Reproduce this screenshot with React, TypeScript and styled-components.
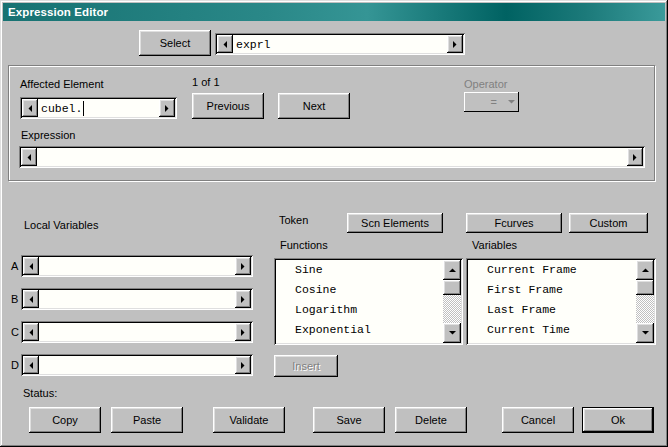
import React from 'react';
import styled, { createGlobalStyle } from 'styled-components';

const GlobalStyle = createGlobalStyle`
  html, body {
    margin: 0;
    padding: 0;
    background: #c0c0c0;
  }
  body {
    font-family: "Liberation Sans", Arial, sans-serif;
    font-size: 11px;
    color: #000;
  }
`;

const raised = `
  box-shadow: inset -1px -1px #000, inset 1px 1px #fff, inset -2px -2px #808080, inset 2px 2px #dfdfdf;
`;

const sunken = `
  box-shadow: inset 1px 1px #808080, inset -1px -1px #fff, inset 2px 2px #000, inset -2px -2px #dfdfdf;
`;

const Window = styled.div`
  width: 668px;
  height: 447px;
  box-sizing: border-box;
  background: #c0c0c0;
  box-shadow: inset -1px -1px #000, inset 1px 1px #dfdfdf, inset -2px -2px #808080, inset 2px 2px #fff;
  display: flex;
  flex-direction: column;
  overflow: hidden;
`;

const TitleBar = styled.div`
  margin: 3px 3px 0;
  height: 18px;
  flex: none;
  display: flex;
  align-items: center;
  padding-left: 5px;
  background: linear-gradient(
    to right,
    #177272 0%,
    #2a8888 40%,
    #359595 55%,
    #006262 76%,
    #1c7a7a 88%,
    #3a9a9a 100%
  );
  color: #fff;
  font-weight: bold;
  font-size: 11.5px;
  letter-spacing: 0.1px;
`;

const Row = styled.div<{ $mt?: number; $ml?: number }>`
  display: flex;
  align-items: flex-start;
  margin-top: ${p => p.$mt ?? 0}px;
  margin-left: ${p => p.$ml ?? 0}px;
`;

const Col = styled.div<{ $w?: number; $mt?: number; $ml?: number }>`
  display: flex;
  flex-direction: column;
  flex: none;
  ${p => (p.$w ? `width: ${p.$w}px;` : '')}
  margin-top: ${p => p.$mt ?? 0}px;
  margin-left: ${p => p.$ml ?? 0}px;
`;

const Label = styled.div<{ $mt?: number; $ml?: number; $w?: number; $disabled?: boolean }>`
  height: 14px;
  line-height: 14px;
  white-space: nowrap;
  margin-top: ${p => p.$mt ?? 0}px;
  margin-left: ${p => p.$ml ?? 0}px;
  ${p => (p.$w ? `width: ${p.$w}px; flex: none;` : '')}
  color: ${p => (p.$disabled ? '#808080' : '#000')};
`;

const Button = styled.button<{ $w: number; $h?: number; $ml?: number; $mt?: number; $default?: boolean; $disabled?: boolean }>`
  width: ${p => p.$w}px;
  height: ${p => p.$h ?? 26}px;
  flex: none;
  box-sizing: border-box;
  margin: ${p => p.$mt ?? 0}px 0 0 ${p => p.$ml ?? 0}px;
  padding: 0;
  background: #c0c0c0;
  font-family: "Liberation Sans", Arial, sans-serif;
  font-size: 11px;
  color: ${p => (p.$disabled ? '#808080' : '#000')};
  ${p => (p.$disabled ? 'text-shadow: 1px 1px #fff;' : '')}
  border: ${p => (p.$default ? '1px solid #000' : 'none')};
  ${raised}
`;

const GroupBox = styled.div`
  margin: 9px 0 0 8px;
  width: 647px;
  height: 116px;
  box-sizing: border-box;
  border: 1px solid #808080;
  box-shadow: inset 1px 1px #fff, 1px 1px #fff;
  padding: 10px 0 0 11px;
  display: flex;
  flex-direction: column;
`;

const ScrollField = styled.div<{ $w: number; $mt?: number; $ml?: number }>`
  width: ${p => p.$w}px;
  height: 22px;
  flex: none;
  box-sizing: border-box;
  padding: 2px;
  margin-top: ${p => p.$mt ?? 0}px;
  margin-left: ${p => p.$ml ?? 0}px;
  display: flex;
  background: #fffffa;
  ${sunken}
`;

const ArrowBtn = styled.div<{ $h?: number }>`
  width: 16px;
  flex: none;
  ${p => (p.$h ? `height: ${p.$h}px;` : '')}
  background: #c0c0c0;
  display: flex;
  align-items: center;
  justify-content: center;
  ${raised}
`;

const FieldText = styled.div`
  flex: 1;
  display: flex;
  align-items: center;
  padding-left: 3px;
  font-family: "Liberation Mono", "Courier New", monospace;
  font-size: 11.5px;
  white-space: pre;
`;

const Caret = styled.span`
  display: inline-block;
  width: 1px;
  height: 15px;
  background: #000;
  margin-left: 1px;
`;

const Combo = styled.div`
  width: 55px;
  height: 20px;
  margin-top: 1px;
  box-sizing: border-box;
  background: #c0c0c0;
  display: flex;
  align-items: center;
  justify-content: flex-end;
  padding-right: 4px;
  gap: 11px;
  color: #808080;
  font-size: 11px;
  box-shadow: inset -1px -1px #000, inset 1px 1px #fff;
`;

const Lower = styled.div`
  display: flex;
  align-items: flex-start;
`;

const VarRow = styled.div<{ $mt: number }>`
  display: flex;
  align-items: center;
  margin-top: ${p => p.$mt}px;
`;

const Letter = styled.div`
  width: 10px;
  flex: none;
  line-height: 14px;
`;

const TwoCols = styled.div<{ $mt: number }>`
  display: grid;
  grid-template-columns: 189px 190px;
  column-gap: 3px;
  margin-top: ${p => p.$mt}px;
`;

const ListBox = styled.div`
  height: 87px;
  box-sizing: border-box;
  padding: 2px;
  display: flex;
  background: #fffffa;
  ${sunken}
`;

const ListItems = styled.div`
  flex: 1;
  padding-left: 19px;
  font-family: "Liberation Mono", "Courier New", monospace;
  font-size: 11.5px;
  line-height: 20px;
  white-space: pre;
  overflow: hidden;
`;

const VScroll = styled.div`
  width: 18px;
  flex: none;
  display: flex;
  flex-direction: column;
`;

const ScrollBtn = styled.div<{ $h: number }>`
  height: ${p => p.$h}px;
  flex: none;
  background: #c0c0c0;
  display: flex;
  align-items: center;
  justify-content: center;
  ${raised}
`;

const Track = styled.div`
  flex: 1;
  background: repeating-conic-gradient(#c0c0c0 0% 25%, #ffffff 0% 50%) 0 0 / 2px 2px;
`;

const Arrow = ({ dir, color = '#000' }: { dir: 'left' | 'right' | 'up' | 'down'; color?: string }) => {
  const pts = {
    left: '4,0 4,7 0.5,3.5',
    right: '0,0 0,7 3.5,3.5',
    up: '0,4 7,4 3.5,0.5',
    down: '0,0 7,0 3.5,3.5',
  }[dir];
  const horiz = dir === 'left' || dir === 'right';
  return (
    <svg width={horiz ? 4 : 7} height={horiz ? 7 : 4} style={{ display: 'block' }}>
      <polygon points={pts} fill={color} />
    </svg>
  );
};

const Field = ({ w, text, caret, mt, ml }: { w: number; text?: string; caret?: boolean; mt?: number; ml?: number }) => (
  <ScrollField $w={w} $mt={mt} $ml={ml}>
    <ArrowBtn>
      <Arrow dir="left" />
    </ArrowBtn>
    <FieldText>
      {text}
      {caret && <Caret />}
    </FieldText>
    <ArrowBtn>
      <Arrow dir="right" />
    </ArrowBtn>
  </ScrollField>
);

const List = ({ items }: { items: string[] }) => (
  <ListBox>
    <ListItems>
      {items.map(i => (
        <div key={i}>{i}</div>
      ))}
    </ListItems>
    <VScroll>
      <ScrollBtn $h={20}>
        <Arrow dir="up" />
      </ScrollBtn>
      <ScrollBtn $h={15} />
      <Track />
      <ScrollBtn $h={20}>
        <Arrow dir="down" />
      </ScrollBtn>
    </VScroll>
  </ListBox>
);

export default function App() {
  return (
    <>
      <GlobalStyle />
      <Window>
        <TitleBar>Expression Editor</TitleBar>

        <Row $mt={9} $ml={139}>
          <Button $w={72}>Select</Button>
          <Field w={250} text="exprl" mt={3} ml={4} />
        </Row>

        <GroupBox>
          <Row>
            <Col $w={157}>
              <Label $mt={1}>Affected Element</Label>
              <Field w={157} text="cubel." caret mt={6} />
            </Col>
            <Col $ml={15}>
              <Label $mt={-1}>1 of 1</Label>
              <Row $mt={4}>
                <Button $w={72}>Previous</Button>
                <Button $w={72} $ml={14}>Next</Button>
              </Row>
            </Col>
            <Col $ml={114}>
              <Label $mt={1} $disabled>Operator</Label>
              <Combo>
                <span>=</span>
                <Arrow dir="down" color="#808080" />
              </Combo>
            </Col>
          </Row>
          <Label $mt={9} $ml={1}>Expression</Label>
          <Field w={626} mt={4} ml={-1} />
        </GroupBox>

        <Lower>
          <Col $ml={11}>
            <Label $mt={37} $ml={13}>Local Variables</Label>
            {['A', 'B', 'C', 'D'].map((l, i) => (
              <VarRow key={l} $mt={i === 0 ? 23 : 11}>
                <Letter>{l}</Letter>
                <Field w={232} />
              </VarRow>
            ))}
          </Col>
          <Col $ml={21} $mt={32}>
            <Row>
              <Label $w={68} $ml={5} $mt={0}>Token</Label>
              <Button $w={96} $h={20}>Scn Elements</Button>
              <Button $w={96} $h={20} $ml={23}>Fcurves</Button>
              <Button $w={79} $h={20} $ml={7}>Custom</Button>
            </Row>
            <TwoCols $mt={5}>
              <Label $ml={6}>Functions</Label>
              <Label $ml={6}>Variables</Label>
            </TwoCols>
            <TwoCols $mt={6}>
              <List items={['Sine', 'Cosine', 'Logarithm', 'Exponential']} />
              <List items={['Current Frame', 'First Frame', 'Last Frame', 'Current Time']} />
            </TwoCols>
            <Button $w={64} $h={22} $mt={10} $disabled>Insert</Button>
          </Col>
        </Lower>

        <Label $mt={9} $ml={23}>Status:</Label>
        <Row $mt={7} $ml={29}>
          <Button $w={72}>Copy</Button>
          <Button $w={72} $ml={10}>Paste</Button>
          <Button $w={72} $ml={30}>Validate</Button>
          <Button $w={72} $ml={28}>Save</Button>
          <Button $w={72} $ml={10}>Delete</Button>
          <Button $w={72} $ml={35}>Cancel</Button>
          <Button $w={72} $ml={8} $default>Ok</Button>
        </Row>
      </Window>
    </>
  );
}
